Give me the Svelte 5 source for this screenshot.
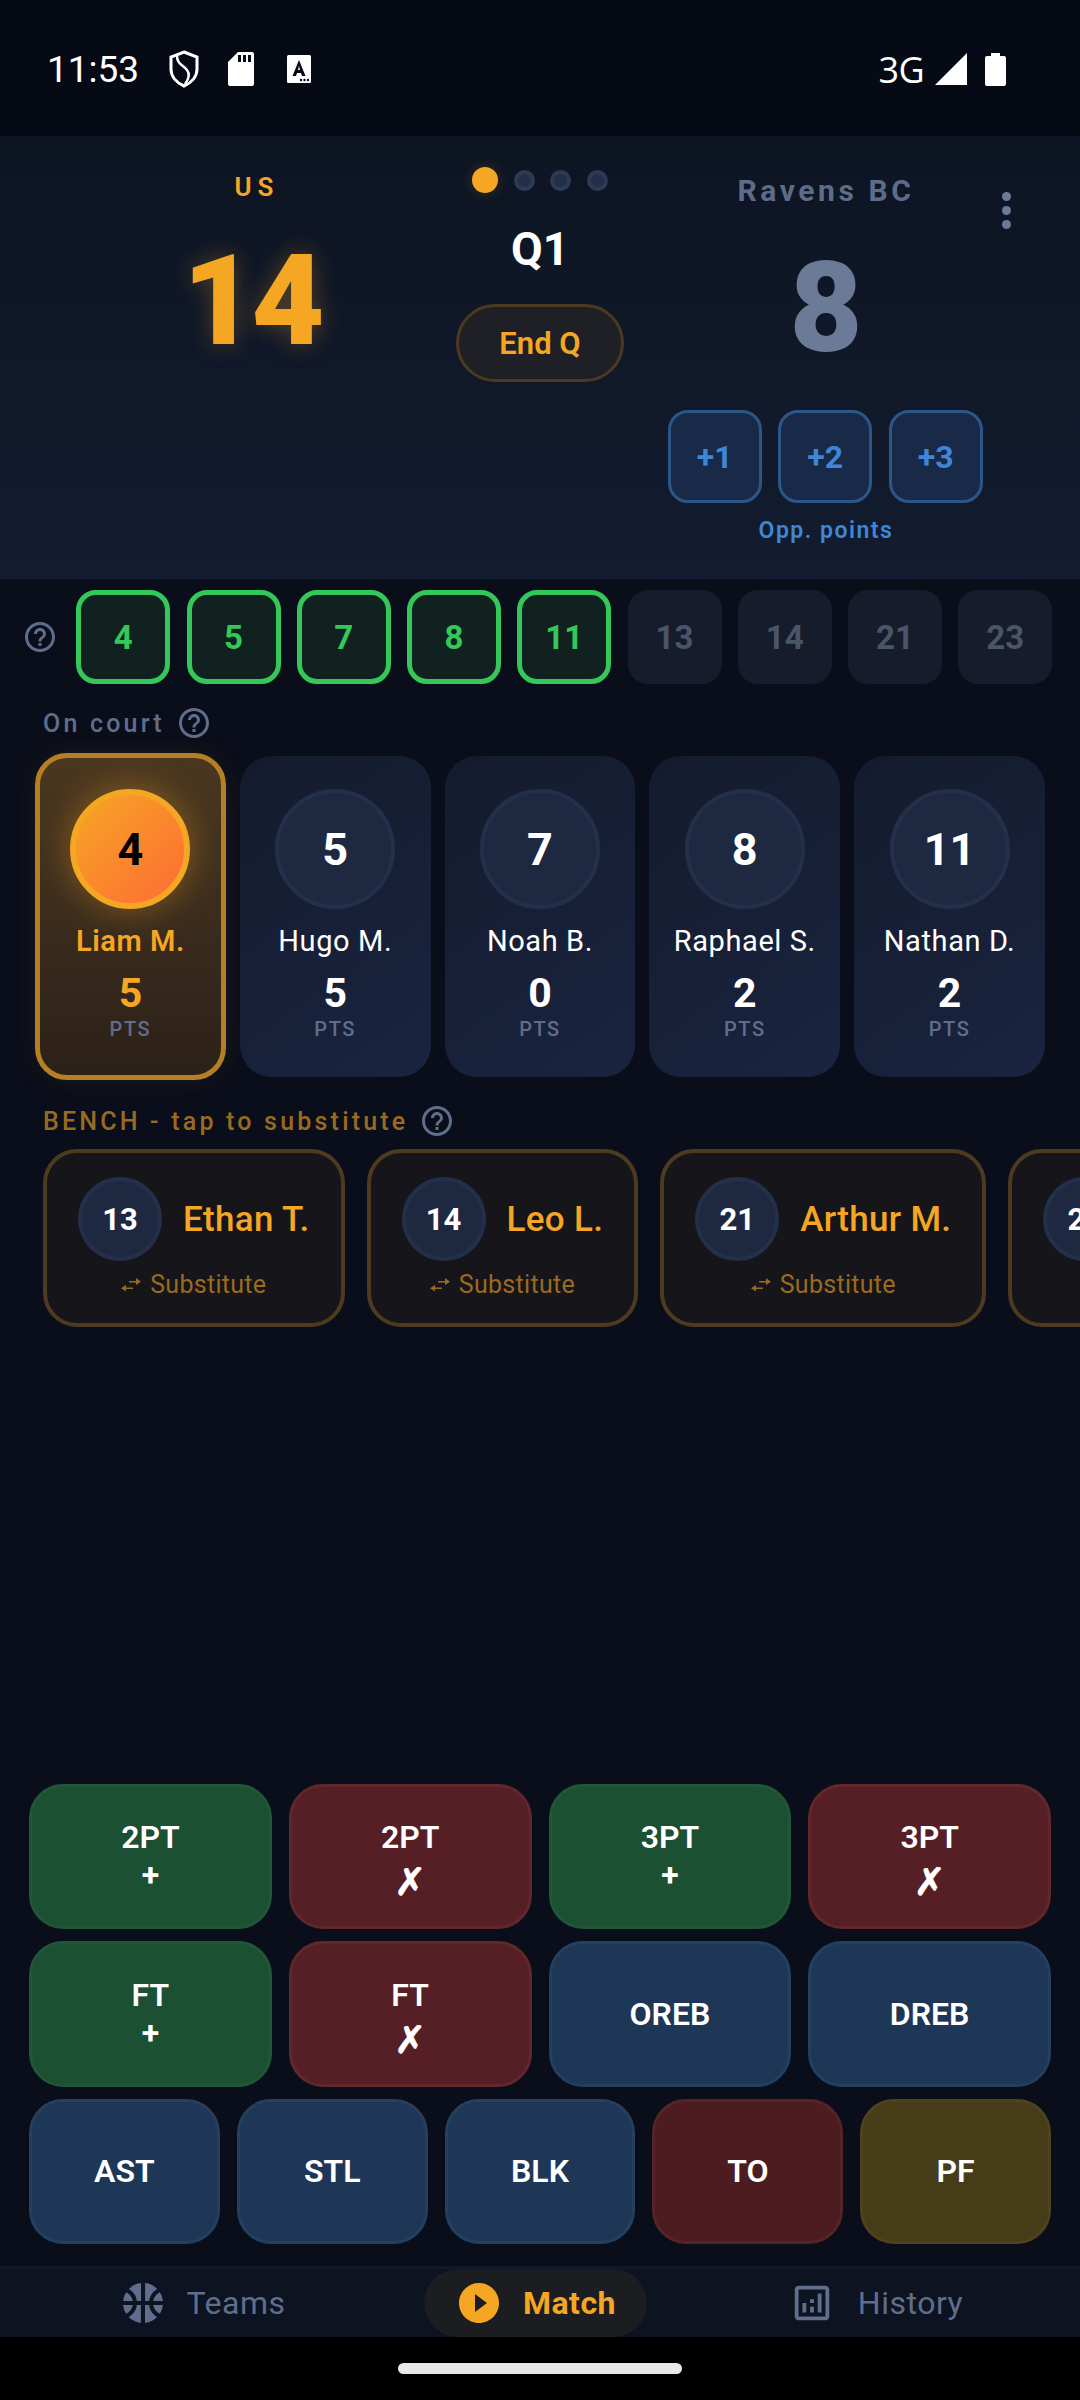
<script>
  const chips = [
    { n: 4, on: true }, { n: 5, on: true }, { n: 7, on: true }, { n: 8, on: true }, { n: 11, on: true },
    { n: 13, on: false }, { n: 14, on: false }, { n: 21, on: false }, { n: 23, on: false },
  ];
  const court = [
    { n: 4, name: 'Liam M.', pts: 5, active: true },
    { n: 5, name: 'Hugo M.', pts: 5 },
    { n: 7, name: 'Noah B.', pts: 0 },
    { n: 8, name: 'Raphael S.', pts: 2 },
    { n: 11, name: 'Nathan D.', pts: 2 },
  ];
  const bench = [
    { n: 13, name: 'Ethan T.' },
    { n: 14, name: 'Leo L.' },
    { n: 21, name: 'Arthur M.' },
    { n: 23, name: 'Lucas R.' },
  ];
  const shots = [
    { top: '2PT', sub: '+', kind: 'good' },
    { top: '2PT', sub: '✗', kind: 'bad' },
    { top: '3PT', sub: '+', kind: 'good' },
    { top: '3PT', sub: '✗', kind: 'bad' },
    { top: 'FT', sub: '+', kind: 'good' },
    { top: 'FT', sub: '✗', kind: 'bad' },
    { top: 'OREB', kind: 'neutral' },
    { top: 'DREB', kind: 'neutral' },
  ];
  const others = [
    { top: 'AST', kind: 'neutral' },
    { top: 'STL', kind: 'neutral' },
    { top: 'BLK', kind: 'neutral' },
    { top: 'TO', kind: 'turnover' },
    { top: 'PF', kind: 'foul' },
  ];
  const helpPath = 'M11 18h2v-2h-2v2zm1-16C6.48 2 2 6.48 2 12s4.48 10 10 10 10-4.48 10-10S17.52 2 12 2zm0 18c-4.41 0-8-3.59-8-8s3.59-8 8-8 8 3.59 8 8-3.59 8-8 8zm0-14c-2.21 0-4 1.79-4 4h2c0-1.1.9-2 2-2s2 .9 2 2c0 2-3 1.75-3 5h2c0-2.25 3-2.5 3-5 0-2.21-1.79-4-4-4z';
</script>

<div class="screen">
  <div class="status">
    <span class="time">11:53</span>
    <svg class="st shield" viewBox="0 0 32 38" width="32" height="38">
      <path d="M16 2 L29 7 V19 C29 27 23 33 16 36 C9 33 3 27 3 19 V7 Z" fill="none" stroke="#fff" stroke-width="3"/>
      <path d="M9 6 C9 14 15 15 19 20 C22 24 21 29 17 34" fill="none" stroke="#fff" stroke-width="2.5"/>
    </svg>
    <svg class="st sd" viewBox="0 0 26 34" width="26" height="34">
      <path d="M10 0 H24 a2 2 0 0 1 2 2 V32 a2 2 0 0 1 -2 2 H2 a2 2 0 0 1 -2 -2 V10 Z" fill="#fff"/>
      <rect x="10" y="3" width="3" height="7" fill="#060a14"/>
      <rect x="15" y="3" width="3" height="7" fill="#060a14"/>
      <rect x="20" y="3" width="3" height="7" fill="#060a14"/>
    </svg>
    <svg class="st abox" viewBox="0 0 24 28" width="24" height="28">
      <rect width="24" height="28" rx="1.5" fill="#fff"/>
      <path d="M12 5 L5.5 21 H9 L10 18 H14 L15 21 H18.5 Z M11 15 L12 11 L13 15 Z" fill="#060a14" fill-rule="evenodd"/>
      <circle cx="14" cy="25" r="1.2" fill="#060a14"/><circle cx="17.5" cy="25" r="1.2" fill="#060a14"/><circle cx="21" cy="25" r="1.2" fill="#060a14"/>
    </svg>
    <span class="net">3G</span>
    <svg class="signal" viewBox="0 0 32 32" width="32" height="32"><path d="M32 0 V32 H0 Z" fill="#fff"/></svg>
    <svg class="battery" viewBox="0 0 21 33" width="21" height="33">
      <path d="M6 0 H15 V3 H19 a2 2 0 0 1 2 2 V31 a2 2 0 0 1 -2 2 H2 a2 2 0 0 1 -2 -2 V5 a2 2 0 0 1 2 -2 H6 Z" fill="#fff"/>
    </svg>
  </div>

  <header class="score">
    <div class="team us">
      <div class="us-label">US</div>
      <div class="us-score">14</div>
    </div>
    <div class="period">
      <div class="dots">
        <span class="dot now"></span><span class="dot"></span><span class="dot"></span><span class="dot"></span>
      </div>
      <div class="q">Q1</div>
      <button class="end-q">End Q</button>
    </div>
    <div class="team them">
      <div class="them-label">Ravens BC</div>
      <div class="them-score">8</div>
      <div class="opp-btns">
        <button>+1</button><button>+2</button><button>+3</button>
      </div>
      <div class="opp-label">Opp. points</div>
    </div>
    <div class="more"><span></span><span></span><span></span></div>
  </header>

  <div class="chips">
    <svg class="help" viewBox="0 0 24 24" width="36" height="36"><path d={helpPath}/></svg>
    {#each chips as c}
      <div class="chip" class:on={c.on}>{c.n}</div>
    {/each}
  </div>

  <div class="label court-label">
    <span>On court</span>
    <svg class="help" viewBox="0 0 24 24" width="36" height="36"><path d={helpPath}/></svg>
  </div>
  <div class="court">
    {#each court as p}
      <div class="card" class:active={p.active}>
        <div class="avatar">{p.n}</div>
        <div class="name">{p.name}</div>
        <div class="pts">{p.pts}</div>
        <div class="pts-label">PTS</div>
      </div>
    {/each}
  </div>

  <div class="label bench-label">
    <span>BENCH - tap to substitute</span>
    <svg class="help" viewBox="0 0 24 24" width="36" height="36"><path d={helpPath}/></svg>
  </div>
  <div class="bench">
    {#each bench as p}
      <div class="bench-card">
        <div class="bench-top">
          <div class="bench-avatar">{p.n}</div>
          <div class="bench-name">{p.name}</div>
        </div>
        <div class="sub">
          <svg viewBox="0 0 20 16" width="20" height="16">
            <path d="M1 12 H12 V10.5 H1 Z M5 8 L0 11.2 L5 14.5 Z M8 4 H19 V5.5 H8 Z M15 1 L20 4.7 L15 8 Z" fill="#9a6a20"/>
          </svg>
          <span>Substitute</span>
        </div>
      </div>
    {/each}
  </div>

  <div class="spacer"></div>

  <div class="actions">
    <div class="grid four">
      {#each shots as b}
        <button class="act {b.kind}">
          <span>{b.top}</span>
          {#if b.sub}<span class="act-sub">{b.sub}</span>{/if}
        </button>
      {/each}
    </div>
    <div class="grid five">
      {#each others as b}
        <button class="act {b.kind}"><span>{b.top}</span></button>
      {/each}
    </div>
  </div>

  <nav class="nav">
    <div class="tab">
      <svg viewBox="0 0 24 24" width="48" height="48">
        <path d="M17.09 11h4.86c-.16-1.61-.71-3.11-1.54-4.4-1.73.83-2.99 2.45-3.32 4.4zM6.91 11c-.33-1.95-1.59-3.57-3.32-4.4-.83 1.29-1.38 2.79-1.54 4.4h4.86zM15.07 11c.32-2.59 1.88-4.79 4.06-6-1.6-1.63-3.72-2.74-6.09-2.95V11h2.03zM8.93 11H11V2.05C8.62 2.27 6.5 3.37 4.91 5c2.18 1.21 3.7 3.41 4.02 6zM15.07 13H13v8.95c2.38-.21 4.5-1.32 6.09-2.95-2.18-1.21-3.7-3.41-4.02-6zM3.59 17.4c1.72-.83 2.99-2.46 3.32-4.4H2.05c.16 1.61.71 3.11 1.54 4.4zM17.09 13c.33 1.95 1.59 3.57 3.32 4.4.83-1.29 1.38-2.79 1.54-4.4h-4.86zM8.93 13c-.32 2.59-1.88 4.79-4.06 6 1.6 1.63 3.72 2.74 6.09 2.95V13H8.93z"/>
      </svg>
      <span>Teams</span>
    </div>
    <div class="tab current">
      <svg viewBox="0 0 24 24" width="48" height="48"><path d="M12 2C6.48 2 2 6.48 2 12s4.48 10 10 10 10-4.48 10-10S17.52 2 12 2zm-2 14.5v-9l6 4.5-6 4.5z"/></svg>
      <span>Match</span>
    </div>
    <div class="tab">
      <svg viewBox="0 0 24 24" width="46" height="46">
        <path d="M19 3H5c-1.1 0-2 .9-2 2v14c0 1.1.9 2 2 2h14c1.1 0 2-.9 2-2V5c0-1.1-.9-2-2-2zm0 16H5V5h14v14zM7 12h2v5H7zM15 7h2v10h-2zM11 14h2v3h-2zM11 10h2v2h-2z"/>
      </svg>
      <span>History</span>
    </div>
  </nav>
  <div class="home"><div class="home-pill"></div></div>
</div>

<style>
  :global(body) { margin: 0; background: #0a0e1a; }
  .screen {
    width: 1080px; height: 2400px; display: flex; flex-direction: column; overflow: hidden;
    background: #0a0e1a; color: #fff; font-family: Roboto, "Liberation Sans", sans-serif;
  }
  button { font-family: inherit; padding: 0; cursor: pointer; }

  .status {
    height: 136px; flex-shrink: 0; display: flex; align-items: center; background: #060a14;
    padding: 2px 74px 0 47px; box-sizing: border-box;
  }
  .time { font-size: 37px; width: 92px; }
  .st { flex-shrink: 0; }
  .shield { margin-left: 29px; }
  .sd { margin-left: 28px; }
  .abox { margin-left: 33px; }
  .net { margin-left: auto; font-size: 36px; font-family: "Open Sans", Roboto, sans-serif; letter-spacing: -0.6px; }
  .signal { margin-left: 11px; }
  .battery { margin-left: 18px; }

  .score {
    position: relative; height: 443px; flex-shrink: 0; box-sizing: border-box; padding: 0 52px;
    display: grid; grid-template-columns: 1fr 168px 1fr;
    background: linear-gradient(180deg, #0d1422, #131c30);
  }
  .team { display: flex; flex-direction: column; align-items: center; }
  .us-label {
    margin-top: 36px; font-size: 26px; line-height: 30px; font-weight: 600; letter-spacing: 6px;
    color: #f5a623; padding-left: 6px;
  }
  .us-score {
    margin-top: 36px; padding-right: 5px; font-size: 126px; line-height: 126px; font-weight: 900; color: #f5a623;
    letter-spacing: -4px; text-shadow: 0 0 24px rgba(245, 166, 35, 0.3);
  }
  .them-label {
    margin-top: 37px; font-size: 30px; line-height: 36px; font-weight: 700; letter-spacing: 3.6px; color: #5d6c8a;
  }
  .them-score { margin-top: 36px; font-size: 126px; line-height: 126px; font-weight: 900; color: #6b7a96; }
  .opp-btns { display: flex; gap: 16.5px; margin: 39px 1.5px 0 0; }
  .opp-btns button {
    width: 94px; height: 93px; box-sizing: border-box; border: 3px solid #2b5688; border-radius: 20px;
    background: #182a47; color: #3f87d6; font-size: 32px; font-weight: 700;
  }
  .opp-label {
    margin-top: 14px; font-size: 23px; line-height: 28px; font-weight: 600; letter-spacing: 1.5px; color: #3f87d6;
  }
  .period { display: flex; flex-direction: column; align-items: center; }
  .dots { display: flex; align-items: center; gap: 15.5px; margin-top: 31px; height: 26px; }
  .dot {
    width: 21px; height: 21px; box-sizing: border-box; border-radius: 50%;
    background: #232f48; border: 4px solid #2e3a55;
  }
  .dot.now { width: 26px; height: 26px; background: #f5a623; border: none; box-shadow: 0 0 14px rgba(245, 166, 35, 0.2); }
  .q { margin-top: 33px; font-size: 46px; line-height: 46px; font-weight: 700; }
  .end-q {
    margin-top: 32px; width: 168px; height: 78px; border-radius: 39px; border: 3px solid #4c3a20;
    background: #1e2025; color: #f5a623; font-size: 31px; font-weight: 600;
  }
  .more {
    position: absolute; left: 1002px; top: 56px; display: flex; flex-direction: column; gap: 5px;
  }
  .more span { width: 9px; height: 9px; border-radius: 50%; background: #6b7a96; }

  .help { fill: #5f6e8c; flex-shrink: 0; }

  .chips { display: flex; align-items: center; margin-top: 11px; padding-left: 22px; gap: 16.25px; }
  .chips .help { margin-right: 2px; }
  .chip {
    width: 94px; height: 94px; box-sizing: border-box; flex-shrink: 0; border-radius: 20px;
    display: flex; align-items: center; justify-content: center;
    background: #161c2b; color: #4a5569; font-size: 33px; font-weight: 700;
  }
  .chip.on { background: #10211f; color: #34c759; border: 5px solid #34c759; }

  .label {
    display: flex; align-items: center; gap: 11px; padding-left: 43px; font-size: 25px; height: 30px;
    font-weight: 500; letter-spacing: 3.2px;
  }
  .court-label { margin-top: 24px; color: #5f6e8c; }
  .bench-label { margin-top: 29px; color: #9a6a20; }

  .court { display: flex; gap: 14px; padding: 0 35px; margin-top: 18px; }
  .card {
    flex: 0 0 190.8px; height: 321px; box-sizing: border-box; border-radius: 32px; padding-top: 33px;
    display: flex; flex-direction: column; align-items: center;
    background: linear-gradient(145deg, #141b2d, #1a2440);
  }
  .card.active {
    height: 327px; margin: -3px 0; padding-top: 31px; border: 5px solid #b67f24;
    background: linear-gradient(180deg, #4a3720, #2c2119);
    box-shadow: 0 0 30px rgba(245, 166, 35, 0.08);
  }
  .avatar {
    width: 120px; height: 120px; box-sizing: border-box; border-radius: 50%; border: 4px solid #242f4a;
    background: #1e2840; display: flex; align-items: center; justify-content: center;
    font-size: 45px; font-weight: 700;
  }
  .active .avatar {
    border: 6px solid #f5a623; color: #000;
    background: linear-gradient(135deg, #f5a623, #ff6b35);
    box-shadow: 0 0 36px rgba(245, 166, 35, 0.4);
  }
  .name { margin-top: 14px; font-size: 29px; line-height: 36px; white-space: nowrap; letter-spacing: 0.6px; }
  .active .name { color: #f5a623; font-weight: 600; }
  .pts { margin-top: 10px; font-size: 41px; line-height: 48px; font-weight: 700; }
  .active .pts { color: #f5a623; }
  .pts-label { font-size: 20px; line-height: 24px; font-weight: 500; letter-spacing: 1.6px; color: #5f6e8c; }

  .bench { display: flex; gap: 22px; padding-left: 43px; margin-top: 13px; }
  .bench-card {
    flex-shrink: 0; height: 178px; box-sizing: border-box; padding: 24px 31px 0; border: 4px solid #4e3a1f;
    border-radius: 34px; background: #16151a;
  }
  .bench-top { display: flex; align-items: center; gap: 21px; }
  .bench-avatar {
    width: 84px; height: 84px; box-sizing: border-box; border-radius: 50%; border: 4px solid #242f4a;
    background: #1e2840; display: flex; align-items: center; justify-content: center;
    font-size: 31px; font-weight: 700; flex-shrink: 0;
  }
  .bench-name { font-size: 35px; font-weight: 500; color: #f5a623; white-space: nowrap; letter-spacing: 0.3px; }
  .sub {
    margin-top: 9px; display: flex; align-items: center; justify-content: center; gap: 9px;
    font-size: 25px; line-height: 30px; color: #9a6a20; letter-spacing: 0.3px;
  }

  .spacer { flex: 1; }

  .actions { padding: 0 29px; display: flex; flex-direction: column; gap: 12px; margin-bottom: 22px; }
  .grid { display: grid; gap: 12px 17px; }
  .four { grid-template-columns: repeat(4, 1fr); grid-auto-rows: 145.5px; }
  .five { grid-template-columns: repeat(5, 1fr); grid-auto-rows: 145.5px; }
  .act {
    display: flex; flex-direction: column; align-items: center; justify-content: center; border-radius: 34px;
    border: 3px solid; color: #fff; font-size: 32px; font-weight: 600; line-height: 38px;
  }
  .act-sub { font-family: Roboto, "DejaVu Sans", sans-serif; font-weight: 700; }
  .bad .act-sub { font-size: 38px; padding-top: 7px; margin-bottom: -7px; -webkit-text-stroke: 0.8px #fff; }
  .good { background: #1b5032; border-color: #215638; }
  .bad { background: #561f25; border-color: #61282c; }
  .neutral { background: #1e3756; border-color: #25405f; }
  .turnover { background: #4c1c21; border-color: #572327; }
  .foul { background: #463c17; border-color: #4e431e; }

  .nav {
    height: 71px; flex-shrink: 0; box-sizing: border-box; border-top: 3px solid #111827; background: #0d1320;
    display: flex;
  }
  .tab {
    display: flex; align-items: center; justify-content: center; gap: 20px;
    font-size: 32px; color: #5f6e8c; fill: #5f6e8c; letter-spacing: 0.5px;
  }
  .tab:first-child { flex: 0 0 404px; }
  .tab:last-child { flex: 1; margin-left: 25px; gap: 23px; }
  .tab.current {
    flex: 0 0 223px; margin-left: 20px; border-radius: 34px; background: #1c1d21; color: #f5a623; fill: #f5a623; font-weight: 700;
  }
  .home { height: 63px; flex-shrink: 0; background: #000; display: flex; justify-content: center; padding-top: 26px; box-sizing: border-box; }
  .home-pill { width: 284px; height: 11px; border-radius: 6px; background: #e8e8e8; }
</style>
